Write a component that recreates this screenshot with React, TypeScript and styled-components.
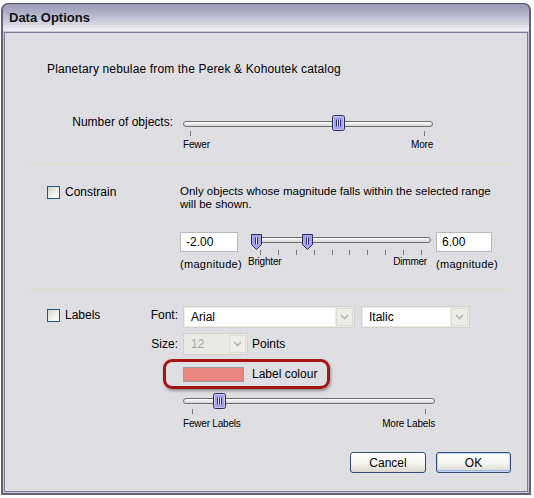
import React from "react";
import styled, { createGlobalStyle, css } from "styled-components";

const GlobalStyle = createGlobalStyle`
  body {
    margin: 0;
    background: #fff;
    font-family: "Liberation Sans", Arial, sans-serif;
    color: #000;
  }
`;

export default function App() {
  return (
    <>
      <GlobalStyle />
      <Window>
        <TitleBar>Data Options</TitleBar>
        <Panel>
          <Intro>Planetary nebulae from the Perek &amp; Kohoutek catalog</Intro>
          <SliderRow>
            <RowLabel>Number of objects:</RowLabel>
            <Slider width={250} thumbLeft={149} trackTop={6} ticks={2} tickPad={[7, 8]} labels={["Fewer", "More"]} labelGap={4} />
          </SliderRow>

          <Separator $top={13} />

          <Section $top={21}>
            <LeftCol $w={133}>
              <CheckRow $top={1}>
                <Checkbox />
                Constrain
              </CheckRow>
            </LeftCol>
            <div>
              <Description>
                Only objects whose magnitude falls within the selected range
                <br />
                will be shown.
              </Description>
              <RangeRow>
                <FieldCol>
                  <TextField $w={58}>-2.00</TextField>
                  <Caption>(magnitude)</Caption>
                </FieldCol>
                <RangeSlider />
                <FieldCol>
                  <TextField $w={56}>6.00</TextField>
                  <Caption>(magnitude)</Caption>
                </FieldCol>
              </RangeRow>
            </div>
          </Section>

          <Separator $top={19} />

          <Section $top={16}>
            <LeftCol $w={103}>
              <CheckRow $top={3}>
                <Checkbox />
                Labels
              </CheckRow>
            </LeftCol>
            <div>
              <FormRow>
                <FieldLabel $lh={18}>Font:</FieldLabel>
                <Combo $w={172}>
                  <ComboText>Arial</ComboText>
                  <ComboArrow />
                </Combo>
                <Combo $w={109}>
                  <ComboText>Italic</ComboText>
                  <ComboArrow />
                </Combo>
              </FormRow>
              <FormRow $top={5}>
                <FieldLabel $lh={22}>Size:</FieldLabel>
                <Combo $w={65}>
                  <ComboText $disabled>12</ComboText>
                  <ComboArrow />
                </Combo>
                <Units>Points</Units>
              </FormRow>
              <Highlight>
                <Swatch />
                Label colour
              </Highlight>
              <Indent>
                <Slider width={252} thumbLeft={30} trackTop={5} ticks={2} tickPad={[9, 9]} labels={["Fewer Labels", "More Labels"]} labelGap={5} />
              </Indent>
            </div>
          </Section>

          <ButtonRow>
            <Button $w={76}>Cancel</Button>
            <Button $w={75} $default>
              OK
            </Button>
          </ButtonRow>
        </Panel>
      </Window>
    </>
  );
}

function BarThumb() {
  return (
    <svg width="13" height="16" viewBox="0 0 13 16">
      <rect x="0.5" y="0.5" width="12" height="15" rx="2" fill="#a3a3f0" stroke="#2a2a4e" />
      <rect x="1.5" y="1.5" width="10" height="13" rx="1" fill="none" stroke="#c9c9fb" />
      <path d="M4.5 4.5v7M6.5 4.5v7M8.5 4.5v7" stroke="#30307a" />
      <path d="M5.5 4.5v7M7.5 4.5v7" stroke="#e4e4ff" />
    </svg>
  );
}

function PointerThumb() {
  return (
    <svg width="11" height="16" viewBox="0 0 11 16">
      <path d="M0.5 0.5H10.5V10.5L5.5 15.5L0.5 10.5Z" fill="#a3a3f0" stroke="#2a2a4e" />
      <path d="M4.5 3.5v7M6.5 3.5v7" stroke="#30307a" />
      <path d="M5.5 3.5v7" stroke="#e4e4ff" />
    </svg>
  );
}

function Chevron() {
  return (
    <svg width="9" height="6" viewBox="0 0 9 6">
      <path d="M1 1l3.5 3.5L8 1" fill="none" stroke="#b4b4ae" strokeWidth="1.6" />
    </svg>
  );
}

type SliderProps = {
  width: number;
  thumbLeft: number;
  trackTop: number;
  ticks: number;
  tickPad: [number, number];
  labels: [string, string];
  labelGap: number;
};

function Slider({ width, thumbLeft, trackTop, ticks, tickPad, labels, labelGap }: SliderProps) {
  return (
    <SliderBox $w={width}>
      <TrackZone $pad={trackTop}>
        <Track />
        <ThumbSlot style={{ left: thumbLeft }}>
          <BarThumb />
        </ThumbSlot>
      </TrackZone>
      <Ticks $l={tickPad[0]} $r={tickPad[1]}>
        {Array.from({ length: ticks }, (_, i) => (
          <Tick key={i} />
        ))}
      </Ticks>
      <SliderLabels $top={labelGap}>
        <span>{labels[0]}</span>
        <span>{labels[1]}</span>
      </SliderLabels>
    </SliderBox>
  );
}

function RangeSlider() {
  return (
    <RangeBox>
      <TrackZone $pad={3}>
        <RangeTrack />
        <ThumbSlot style={{ left: 1 }}>
          <PointerThumb />
        </ThumbSlot>
        <ThumbSlot style={{ left: 52 }}>
          <PointerThumb />
        </ThumbSlot>
      </TrackZone>
      <Ticks $l={10} $r={10}>
        {Array.from({ length: 10 }, (_, i) => (
          <Tick key={i} />
        ))}
      </Ticks>
      <RangeLabels>
        <span>Brighter</span>
        <span>Dimmer</span>
      </RangeLabels>
    </RangeBox>
  );
}

const Window = styled.div`
  box-sizing: border-box;
  width: 530px;
  height: 492px;
  margin: 3px 0 0 1px;
  display: flex;
  flex-direction: column;
  border: 2px solid #62627c;
  border-top: 1px solid #50506a;
  border-radius: 7px 7px 0 0;
  background: linear-gradient(180deg, #9a9ab6 0%, #aeaec8 30%, #d0d0df 68%, #f2f2f6 100%) 0 0 / 100% 27px no-repeat,
    #c6c6d6;
`;

const TitleBar = styled.div`
  height: 27px;
  padding-left: 6px;
  display: flex;
  align-items: center;
  font-size: 13px;
  font-weight: bold;
  color: #111;
`;

const Panel = styled.div`
  flex: 1;
  margin: 1px;
  border: 1px solid #7a7a94;
  background: #dfdfe3;
  display: flex;
  flex-direction: column;
`;

const Intro = styled.div`
  margin: 29px 0 0 42px;
  font-size: 12px;
  letter-spacing: 0.15px;
  line-height: 14px;
`;

const SliderRow = styled.div`
  display: grid;
  grid-template-columns: 126px 250px;
  column-gap: 10px;
  margin: 39px 0 0 42px;
`;

const RowLabel = styled.div`
  text-align: right;
  font-size: 12px;
  line-height: 14px;
`;

const SliderBox = styled.div<{ $w: number }>`
  width: ${(p) => p.$w}px;
`;

const TrackZone = styled.div<{ $pad: number }>`
  position: relative;
  box-sizing: border-box;
  height: 16px;
  padding-top: ${(p) => p.$pad}px;
`;

const Track = styled.div`
  box-sizing: border-box;
  height: 6px;
  border: 1px solid #6e6e6e;
  border-radius: 3px;
  background: linear-gradient(180deg, #ffffff, #d4d4d4);
`;

const RangeTrack = styled(Track)`
  margin-left: 4px;
  margin-right: 1px;
`;

const ThumbSlot = styled.div`
  position: absolute;
  top: 0;
  line-height: 0;
`;

const Ticks = styled.div<{ $l: number; $r: number }>`
  display: flex;
  justify-content: space-between;
  padding: 0 ${(p) => p.$r}px 0 ${(p) => p.$l}px;
`;

const Tick = styled.div`
  width: 1px;
  height: 5px;
  background: #7a7a7a;
`;

const SliderLabels = styled.div<{ $top: number }>`
  display: flex;
  justify-content: space-between;
  margin-top: ${(p) => p.$top}px;
  font-size: 10px;
  line-height: 10px;
  letter-spacing: -0.2px;
`;

const RangeBox = styled.div`
  width: 182px;
  margin: 2px 4px 0 8px;
`;

const RangeLabels = styled(SliderLabels).attrs({ $top: 2 })`
  margin-left: -2px;
  padding-right: 5px;
`;

const Separator = styled.div<{ $top: number }>`
  height: 1px;
  margin: ${(p) => p.$top}px 19px 0 22px;
  background: #e4dbb8;
`;

const Section = styled.div<{ $top: number }>`
  display: flex;
  margin-top: ${(p) => p.$top}px;
  padding-left: 42px;
`;

const LeftCol = styled.div<{ $w: number }>`
  width: ${(p) => p.$w}px;
  flex: none;
`;

const CheckRow = styled.div<{ $top: number }>`
  display: flex;
  align-items: center;
  gap: 5px;
  margin-top: ${(p) => p.$top}px;
  font-size: 12px;
  line-height: 13px;
`;

const Checkbox = styled.div`
  box-sizing: border-box;
  width: 13px;
  height: 13px;
  border: 1px solid #1f5a8c;
  background: linear-gradient(135deg, #d6d5cf 0%, #f2f2ee 60%, #ffffff 100%);
`;

const Description = styled.div`
  font-size: 11.5px;
  line-height: 13px;
`;

const RangeRow = styled.div`
  display: flex;
  align-items: flex-start;
  margin-top: 21px;
`;

const FieldCol = styled.div`
  display: flex;
  flex-direction: column;
`;

const TextField = styled.div<{ $w: number }>`
  box-sizing: border-box;
  width: ${(p) => p.$w}px;
  height: 20px;
  padding-left: 5px;
  border: 1px solid #b7b7b7;
  background: #fff;
  font-size: 12px;
  line-height: 18px;
`;

const Caption = styled.div`
  margin-top: 6px;
  font-size: 11px;
  line-height: 12px;
  letter-spacing: 0.3px;
  white-space: nowrap;
`;

const FormRow = styled.div<{ $top?: number }>`
  display: flex;
  align-items: flex-start;
  gap: 5px;
  margin-top: ${(p) => p.$top ?? 0}px;
  font-size: 12px;
`;

const FieldLabel = styled.div<{ $lh: number }>`
  width: 28px;
  text-align: right;
  line-height: ${(p) => p.$lh}px;
`;

const Combo = styled.div<{ $w: number }>`
  box-sizing: border-box;
  display: flex;
  width: ${(p) => p.$w}px;
  height: 22px;
  padding: 1px;
  border: 1px solid #d2d1ca;
  background: #ecebe5;
  & + & {
    margin-left: 1px;
  }
`;

const ComboText = styled.div<{ $disabled?: boolean }>`
  flex: 1;
  padding-left: 6px;
  background: ${(p) => (p.$disabled ? "#e9e9e6" : "#fff")};
  color: ${(p) => (p.$disabled ? "#a8a8a4" : "#000")};
  line-height: 18px;
`;

const ArrowBox = styled.div`
  box-sizing: border-box;
  width: 17px;
  margin-left: 1px;
  border: 1px solid #dcdcd6;
  background: #eeede8;
  display: flex;
  align-items: center;
  justify-content: center;
`;

function ComboArrow() {
  return (
    <ArrowBox>
      <Chevron />
    </ArrowBox>
  );
}

const Units = styled.div`
  margin-left: -1px;
  line-height: 22px;
`;

const Highlight = styled.div`
  box-sizing: border-box;
  display: inline-flex;
  align-items: center;
  gap: 8px;
  height: 30px;
  margin: 4px 0 0 13px;
  padding: 0 10px 0 17px;
  border: 3px solid #a31414;
  border-radius: 9px;
  box-shadow: 1px 2px 3px rgba(0, 0, 0, 0.35);
  font-size: 12px;
`;

const Swatch = styled.div`
  box-sizing: border-box;
  width: 61px;
  height: 15px;
  border: 1px solid #9b9b9b;
  background: #e8867f;
`;

const Indent = styled.div`
  margin: 4px 0 0 33px;
`;

const ButtonRow = styled.div`
  display: flex;
  justify-content: flex-end;
  gap: 10px;
  margin-top: 23px;
  padding-right: 16px;
`;

const Button = styled.button<{ $w: number; $default?: boolean }>`
  box-sizing: border-box;
  width: ${(p) => p.$w}px;
  height: 21px;
  padding: 0;
  border: 1px solid #304a70;
  border-radius: 3px;
  background: linear-gradient(180deg, #ffffff 0%, #f5f4f0 55%, #dcd8cd 100%);
  font: 12px "Liberation Sans", Arial, sans-serif;
  color: #000;
  ${(p) =>
    p.$default &&
    css`
      box-shadow: inset 0 0 0 1px #c4d8f7, inset 0 -2px 0 0 #9ab8ec;
    `}
`;
